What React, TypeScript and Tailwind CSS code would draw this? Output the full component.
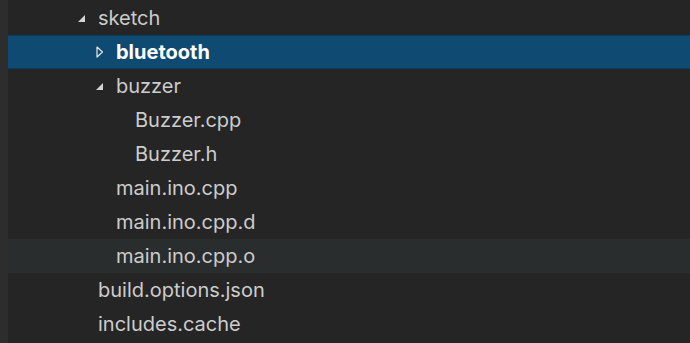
import React from 'react';

type Row = {
  name: string;
  depth: number;
  arrow?: 'open' | 'closed';
  selected?: boolean;
  hover?: boolean;
};

const rows: Row[] = [
  { name: 'sketch', depth: 0, arrow: 'open' },
  { name: 'bluetooth', depth: 1, arrow: 'closed', selected: true },
  { name: 'buzzer', depth: 1, arrow: 'open' },
  { name: 'Buzzer.cpp', depth: 2 },
  { name: 'Buzzer.h', depth: 2 },
  { name: 'main.ino.cpp', depth: 1 },
  { name: 'main.ino.cpp.d', depth: 1 },
  { name: 'main.ino.cpp.o', depth: 1, hover: true },
  { name: 'build.options.json', depth: 0 },
  { name: 'includes.cache', depth: 0 },
];

const indent = ['pl-[90px]', 'pl-[108px]', 'pl-[127px]'];

const OpenArrow = () => (
  <svg className="absolute left-[-21px] top-[13px] w-[9px] h-[9px]" viewBox="0 0 9 9">
    <path d="M8 1 L8 8 L1 8 Z" fill="#d4d4d4" />
  </svg>
);

const ClosedArrow = () => (
  <svg className="absolute left-[-20px] top-[11px] w-[8px] h-[12px]" viewBox="0 0 8 12">
    <path d="M1 1 L6.5 6 L1 11 Z" fill="none" stroke="#e8e8e8" strokeWidth="1.2" strokeLinejoin="round" />
  </svg>
);

export default function App() {
  return (
    <div className="w-[690px] h-[343px] flex bg-[#252526] overflow-hidden" style={{ fontFamily: 'Inter, "Open Sans", sans-serif' }}>
      {/* left gutter */}
      <div className="w-[8px] shrink-0 bg-[#2d2d2d]" />
      <div className="flex-1 pt-px">
        {rows.map((r) => (
          <div
            key={r.name}
            className={`h-[34px] flex items-center text-[20px] ${indent[r.depth]} ${
              r.selected
                ? 'bg-[#0f4a72] border-y border-[#0c3d5f] text-white font-bold'
                : r.hover
                ? 'bg-[#2a2d2e] text-[#cccccc]'
                : 'text-[#cccccc]'
            }`}
          >
            <span className="relative leading-[34px] h-[34px]">
              {r.arrow === 'open' && <OpenArrow />}
              {r.arrow === 'closed' && <ClosedArrow />}
              {r.name}
            </span>
          </div>
        ))}
      </div>
    </div>
  );
}
